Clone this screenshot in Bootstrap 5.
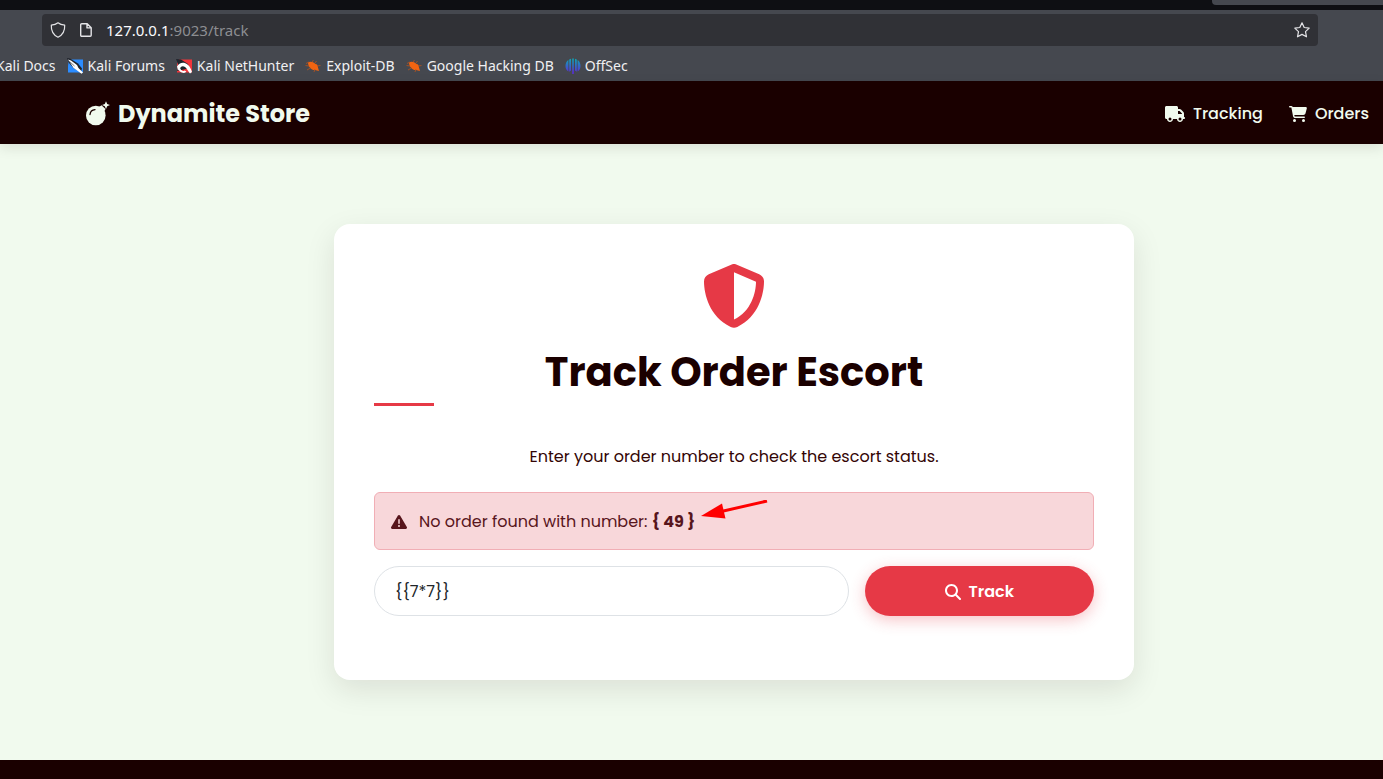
<!DOCTYPE html>
<html lang="en">
<head>
<meta charset="utf-8">
<meta name="viewport" content="width=device-width, initial-scale=1">
<title>Dynamite Store</title>
<link href="https://cdn.jsdelivr.net/npm/bootstrap@5.3.0/dist/css/bootstrap.min.css" rel="stylesheet">
<style>
  :root { --dark: #1a0000; --mint: #f1faee; --red: #e63946; }
  body { background: var(--mint); font-family: Poppins, Inter, sans-serif; color: #330505; overflow-x: hidden; }
  svg { flex: none; }

  /* browser frame */
  .tabstrip { background: #0e0f13; height: 10px; }
  .tab-edge { width: 171px; height: 5px; background: #45484f; border-radius: 0 0 0 4px; }
  .toolbar { background: #45484f; font-family: "Noto Sans", sans-serif; font-size: 15px; line-height: 20px; padding-top: 4px; height: 71px; }
  .urlbar { background: #303136; border-radius: 4px; height: 32px; margin-left: 42px; margin-right: 65px; padding: 0 8px; gap: 10px; color: #fbfbfe; }
  .url-path { color: #8d8e92; }
  .bookmarks { height: 39px; gap: 11px; font-size: 14px; overflow: hidden; }
  .bookmarks a { color: #f0f0f2; gap: 4px; }
  .bookmarks a.first-mark { margin-left: -4px; }

  /* store header */
  .store-nav { background: var(--dark); height: 63px; padding: 2px 14px 0 85px; box-shadow: 0 4px 12px rgba(26,0,0,.1); }
  .store-nav a { color: var(--mint); }
  .brand { font-size: 24px; font-weight: 700; gap: 8px; }
  .store-links { gap: 26px; font-weight: 500; }

  /* tracking card */
  .stage { padding: 80px 0 80px 85px; }
  .track-card { max-width: 800px; border-radius: 16px; padding: 40px 40px 64px; box-shadow: 0 10px 30px rgba(26,0,0,.1); }
  .track-title { font-size: 40px; font-weight: 700; line-height: 48px; color: var(--dark); margin: 20px 0 39px; }
  .track-title::after { content: ""; display: block; width: 60px; height: 3px; background: var(--red); margin-top: 7px; }
  .track-hint { margin-bottom: 23px; }
  .order-alert { --bs-alert-color: #58151c; --bs-alert-bg: #f8d7da; --bs-alert-border-color: #f1aeb5; height: 58px; gap: 12px; padding: 17px 16px 15px; }
  .pointer { left: 100%; top: -10px; margin-left: 6px; }
  .order-input { border-radius: 50px; border-color: #dee2e6; padding: 0 20px; height: 50px; }
  .track-btn { background: var(--red); color: #fff; font-weight: 600; border-radius: 50px; height: 50px; padding: 8px 12px 6px; box-shadow: 0 4px 15px rgba(230,57,70,.3); gap: 8px; }
  .track-btn:hover { background: #c92f3b; color: #fff; }
  .store-footer { background: var(--dark); min-height: 19px; }
</style>
</head>
<body class="d-flex flex-column min-vh-100">
<div class="tabstrip d-flex justify-content-end"><div class="tab-edge"></div></div>
<div class="toolbar">
  <div class="urlbar d-flex align-items-center">
    <svg width="16" height="16" viewBox="0 0 16 16" fill="none" stroke="#e4e4e7" stroke-width="1.2" stroke-linejoin="round"><path d="M8 .8C6.3 2.1 3.800 2.900 1.300 3.200c-.2 4.600 1.500 9.500 6.700 12 5.200-2.500 6.900-7.400 6.700-12C12.200 2.900 9.700 2.100 8 .8z"/></svg>
    <svg width="20" height="16" viewBox="0 0 20 16" fill="none" stroke="#e4e4e7" stroke-width="1.400" stroke-linejoin="round"><path d="M5.700 1.700h5.500l4 4v7.600a1 1 0 0 1-1 1H5.700a1 1 0 0 1-1-1V2.700a1 1 0 0 1 1-1zM11 1.700v4.200h4.200"/></svg>
    <div class="flex-grow-1">127.0.0.1<span class="url-path">:9023/track</span></div>
    <svg width="16" height="16" viewBox="0 0 16 16" fill="none" stroke="#e4e4e7" stroke-width="1.200" stroke-linejoin="round"><path d="M8 .8l2.200 4.700 5 .6-3.700 3.500 1 5.200L8 12.400l-4.500 2.400 1-5.200L.8 6.100l5-.6z"/></svg>
  </div>
  <nav class="bookmarks d-flex align-items-center text-nowrap" aria-label="Bookmarks">
    <a href="#" class="first-mark text-decoration-none">Kali Docs</a>
    <a href="#" class="d-flex align-items-center text-decoration-none">
      <svg width="17" height="16" viewBox="0 0 17 16"><path fill="#2b8cff" d="M2 1.500h14v13H1V8z"/><path fill="#20242c" d="M0 0l3 .5 8 5 4 5-1 3-7-3L2 5z"/><path fill="#fff" d="M1 1.500L4 2.500l6 4.500 1.500 3 4.500 4.500-1.500 1.200L9.500 12 6.500 10 4 6z"/><path d="M2.500 3.500l5 4.500" stroke="#20242c" stroke-width=".6"/></svg>
      Kali Forums</a>
    <a href="#" class="d-flex align-items-center text-decoration-none">
      <svg width="17" height="16" viewBox="0 0 17 16"><path fill="#f2343b" d="M3 1.500h13v13H1V6z"/><path fill="#20242c" d="M0 1l5 .5 7 4.500 1 3-3 2-9 2L2 6z"/><path d="M3.500 10.500c0 3 5 4.500 6 2.500" fill="none" stroke="#fff" stroke-width="1.800"/><path fill="#fff" d="M1 8.500C3 4.500 8 3.500 11.500 6.500 14 8.500 15 11 16 14l-2 1.500c-2-2-3-5-5-6.500-2-1.500-4-1-5 1.500l-2 2z"/></svg>
      Kali NetHunter</a>
    <a href="#" class="d-flex align-items-center text-decoration-none">
      <svg width="17" height="16" viewBox="0 0 17 16"><g id="bug"><path fill="#f26411" d="M3 4.500c2-1.500 5-.8 7.500 1.500 1.500.2 2.500 1.500 2.500 3.500l1 3.500-4-1c-3 .5-7-3-7-7.500z"/><path d="M4 4L1 5.500M4 8L.5 7.500M5.500 10L2 12M7 4L8.500 2M10 5l1.500-2M12 8l3.500-.5M10 11l-1 3" stroke="#b9531c" stroke-width=".8"/></g></svg>
      Exploit-DB</a>
    <a href="#" class="d-flex align-items-center text-decoration-none">
      <svg width="17" height="16" viewBox="0 0 17 16"><use href="#bug"/></svg>
      Google Hacking DB</a>
    <a href="#" class="d-flex align-items-center text-decoration-none">
      <svg width="16" height="16" viewBox="0 0 16 16"><defs><linearGradient id="os" gradientUnits="userSpaceOnUse" x1="0" y1="1" x2="0" y2="15"><stop offset="0" stop-color="#0fa3b5"/><stop offset="1" stop-color="#5a2bd8"/></linearGradient></defs><path fill="url(#os)" d="M3.400 2v11.600C1.500 12.500.5 10.300.5 8s1-4.800 2.900-6zM4.200 1.500L6 .8V12.500l-1.800 1.300zM7.200.5h1.600V16H7.200zM10 .8l1.800.7v12.300L10 12.500zM12.600 2c1.900 1.200 2.900 3.700 2.900 6s-1 4.500-2.900 5.600z"/></svg>
      OffSec</a>
  </nav>
</div>

<header class="store-nav d-flex align-items-center justify-content-between position-relative">
  <a href="#" class="brand d-flex align-items-center text-decoration-none">
    <svg width="25" height="25" viewBox="0 0 25 25"><circle cx="10.800" cy="14.500" r="9.800" fill="#f1faee"/><path fill="#f1faee" d="M14 6l2.500-1.800L20.500 8 19 11zM21 .2l1.200 2.700L25 4l-2.800 1.200L21 8l-1.200-2.800L17 4l2.800-1.100z"/><path d="M5 13.500c.3-3 2-4.600 5-4.900" stroke="#1a0000" stroke-width="1.300" fill="none" stroke-linecap="round"/></svg>
    Dynamite Store</a>
  <nav class="store-links d-flex">
    <a href="#" class="d-flex align-items-center gap-2 text-decoration-none">
      <svg width="20" height="16" viewBox="0 0 640 512" fill="currentColor"><path d="M48 0C21.500 0 0 21.500 0 48V368c0 26.500 21.500 48 48 48H64c0 53 43 96 96 96s96-43 96-96H384c0 53 43 96 96 96s96-43 96-96h32c17.700 0 32-14.300 32-32s-14.300-32-32-32V288 256 237.300c0-17-6.700-33.300-18.700-45.300L512 114.700c-12-12-28.300-18.700-45.300-18.700H416V48c0-26.500-21.500-48-48-48H48zM416 160h50.700L544 237.300V256H416V160zM112 416a48 48 0 1 1 96 0 48 48 0 1 1 -96 0zm368-48a48 48 0 1 1 0 96 48 48 0 1 1 0-96z"/></svg>
      Tracking</a>
    <a href="#" class="d-flex align-items-center gap-2 text-decoration-none">
      <svg width="18" height="16" viewBox="0 0 576 512" fill="currentColor"><path d="M0 24C0 10.700 10.700 0 24 0H69.500c22 0 41.500 12.800 50.600 32h411c26.300 0 45.500 25 38.600 50.400l-41 152.300c-8.500 31.400-37 53.300-69.500 53.300H170.700l5.400 28.500c2.200 11.300 12.100 19.500 23.600 19.500H488c13.300 0 24 10.700 24 24s-10.700 24-24 24H199.700c-34.600 0-64.300-24.600-70.700-58.500L77.400 54.500c-.7-3.800-4-6.500-7.900-6.500H24C10.700 48 0 37.300 0 24zM128 464a48 48 0 1 1 96 0 48 48 0 1 1 -96 0zm336-48a48 48 0 1 1 0 96 48 48 0 1 1 0-96z"/></svg>
      Orders</a>
  </nav>
</header>

<main class="stage">
  <section class="track-card bg-white mx-auto">
    <svg class="d-block mx-auto" width="64" height="64" viewBox="0 0 512 512" fill="#e63946"><path d="M256 0c4.600 0 9.200 1 13.400 2.900L457.700 82.800c22 9.300 38.400 31 38.300 57.200c-.5 99.200-41.300 280.700-213.600 363.200c-16.700 8-36.100 8-52.800 0C57.300 420.700 16.500 239.200 16 140c-.1-26.200 16.300-47.900 38.300-57.200L242.700 2.900C246.800 1 251.400 0 256 0zm0 66.800V444.800C394 378 431.100 230.100 432 141.400L256 66.800z"/></svg>
    <h1 class="track-title text-center">Track Order Escort</h1>
    <p class="track-hint text-center">Enter your order number to check the escort status.</p>
    <div class="alert alert-danger order-alert d-flex align-items-center mb-3" role="alert">
      <svg width="16" height="16" viewBox="0 0 512 512" fill="currentColor"><path d="M256 32c14.200 0 27.300 7.500 34.500 19.800l216 368c7.300 12.400 7.300 27.700 .2 40.100S486.300 480 472 480H40c-14.300 0-27.600-7.700-34.700-20.100s-7-27.800 .2-40.100l216-368C228.700 39.500 241.800 32 256 32zm0 128c-13.300 0-24 10.700-24 24V296c0 13.300 10.700 24 24 24s24-10.700 24-24V184c0-13.300-10.700-24-24-24zm32 224a32 32 0 1 0 -64 0 32 32 0 1 0 64 0z"/></svg>
      <div class="position-relative">No order found with number: <strong>{ 49 }</strong>
        <svg class="pointer position-absolute" width="67" height="20" viewBox="0 0 67 20"><path d="M66 1L18 12" stroke="#f00" stroke-width="3"/><path fill="#f00" d="M0 16L21 3.500 24.500 18.500z"/></svg>
      </div>
    </div>
    <form class="row g-3" onsubmit="return false">
      <div class="col-8"><input type="text" class="form-control order-input" aria-label="Order number" value="{{7*7}}"></div>
      <div class="col-4"><button type="submit" class="btn track-btn w-100 d-flex align-items-center justify-content-center">
        <svg width="16" height="16" viewBox="0 0 512 512" fill="currentColor"><path d="M416 208c0 45.900-14.900 88.300-40 122.700L502.600 457.400c12.500 12.500 12.500 32.800 0 45.300s-32.800 12.500-45.300 0L330.700 376c-34.400 25.200-76.800 40-122.700 40C93.100 416 0 322.900 0 208S93.100 0 208 0S416 93.100 416 208zM208 352a144 144 0 1 0 0-288 144 144 0 1 0 0 288z"/></svg>
        Track</button></div>
    </form>
  </section>
</main>
<footer class="store-footer flex-grow-1"></footer>
<script src="https://cdn.jsdelivr.net/npm/bootstrap@5.3.0/dist/js/bootstrap.bundle.min.js"></script>
</body>
</html>
